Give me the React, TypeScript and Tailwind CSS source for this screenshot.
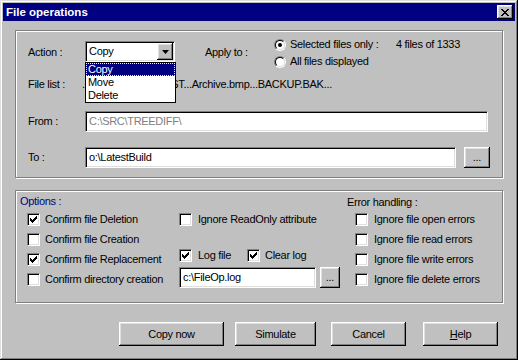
import React from 'react';

// win95 bevels
const sunken =
  'border border-t-[#808080] border-l-[#808080] border-r-white border-b-white shadow-[inset_1px_1px_0_#000,inset_-1px_-1px_0_#dfdfdf]';
const raised =
  'bg-[#c0c0c0] shadow-[inset_-1px_-1px_0_#000,inset_1px_1px_0_#fff,inset_-2px_-2px_0_#808080,inset_2px_2px_0_#dfdfdf]';
const etched = 'border border-[#808080] shadow-[1px_1px_0_#fff,inset_1px_1px_0_#fff]';

function Check({ checked }: { checked?: boolean }) {
  return (
    <span className={`w-[13px] h-[13px] shrink-0 bg-white flex items-center justify-center ${sunken}`}>
      {checked && (
        <svg width="7" height="7" viewBox="0 0 7 7" shapeRendering="crispEdges">
          {[2, 3, 4, 3, 2, 1, 0].map((y, x) => (
            <rect key={x} x={x} y={y} width="1" height="3" fill="#000" />
          ))}
        </svg>
      )}
    </span>
  );
}

function Radio({ checked }: { checked?: boolean }) {
  return (
    <span className="w-[12px] h-[12px] shrink-0 rounded-full border border-t-[#808080] border-l-[#808080] border-r-white border-b-white flex">
      <span className="flex-1 rounded-full border border-t-black border-l-black border-r-[#dfdfdf] border-b-[#dfdfdf] bg-white flex items-center justify-center">
        {checked && <span className="w-[4px] h-[4px] rounded-full bg-black" />}
      </span>
    </span>
  );
}

function CheckRow({ label, checked, gap = 'gap-[6px]' }: { label: string; checked?: boolean; gap?: string }) {
  return (
    <div className={`h-[20px] flex items-center ${gap}`}>
      <Check checked={checked} />
      <span className="whitespace-nowrap">{label}</span>
    </div>
  );
}

function CloseGlyph() {
  const rows: [number, number][][] = [
    [[0, 2], [6, 2]],
    [[1, 2], [5, 2]],
    [[2, 4]],
    [[3, 2]],
    [[2, 4]],
    [[1, 2], [5, 2]],
    [[0, 2], [6, 2]],
  ];
  return (
    <svg width="8" height="7" viewBox="0 0 8 7" shapeRendering="crispEdges">
      {rows.map((segs, y) =>
        segs.map(([x, w], i) => <rect key={`${y}-${i}`} x={x} y={y} width={w} height="1" fill="#000" />)
      )}
    </svg>
  );
}

export default function App() {
  return (
    <div className="w-[518px] h-[360px] bg-[#c0c0c0] shadow-[inset_-1px_-1px_0_#000,inset_1px_1px_0_#dfdfdf,inset_-2px_-2px_0_#808080,inset_2px_2px_0_#fff] flex flex-col text-black text-[11px] leading-[13px] tracking-[-0.3px] font-['Liberation_Sans',Arial,sans-serif]">
      {/* Title bar */}
      <div className="mx-[3px] mt-[3px] h-[18px] bg-[#000080] flex items-center pl-[3px] pr-[2px]">
        <span className="text-white font-bold text-[11.5px] tracking-normal">File operations</span>
        <button className={`ml-auto w-[16px] h-[14px] flex items-center justify-center ${raised}`}>
          <CloseGlyph />
        </button>
      </div>

      {/* Action group */}
      <div className={`relative mx-[15px] mt-[9px] h-[148px] pl-[12px] pt-[5px] ${etched}`}>
        <div className="flex items-start h-[34px]">
          <span className="w-[57px] mt-[10px]">Action :</span>
          <div className={`mt-[5px] w-[90px] h-[21px] bg-white flex items-center ${sunken}`}>
            <span className="pl-[3px]">Copy</span>
            <span className={`ml-auto mr-[1px] w-[16px] h-[17px] flex items-center justify-center ${raised}`}>
              <svg width="7" height="4" viewBox="0 0 7 4">
                <polygon points="0,0 7,0 3.5,4" fill="#000" />
              </svg>
            </span>
          </div>
          <span className="ml-[30px] mt-[10px] w-[69px]">Apply to :</span>
          <div className="flex flex-col">
            <div className="h-[17px] flex items-center">
              <Radio checked />
              <span className="ml-[4px] w-[106px]">Selected files only :</span>
              <span>4 files of 1333</span>
            </div>
            <div className="h-[17px] flex items-center">
              <Radio />
              <span className="ml-[4px]">All files displayed</span>
            </div>
          </div>
        </div>

        <div className="mt-[8px] flex h-[13px]">
          <span className="w-[54px]">File list :</span>
          <span className="whitespace-nowrap">...FileOp.log...LATEST...Archive.bmp...BACKUP.BAK...</span>
        </div>

        <div className="mt-[20px] flex items-center h-[21px]">
          <span className="w-[57px]">From :</span>
          <div className={`w-[403px] h-[21px] bg-white flex items-center pl-[3px] text-[#808080] ${sunken}`}>
            C:\SRC\TREEDIFF\
          </div>
        </div>

        <div className="mt-[15px] flex items-center h-[21px]">
          <span className="w-[57px]">To :</span>
          <div className={`w-[371px] h-[21px] bg-white flex items-center pl-[3px] ${sunken}`}>o:\LatestBuild</div>
          <button className={`ml-[8px] w-[26px] h-[21px] ${raised}`}>...</button>
        </div>

        {/* open combo list */}
        <div className="absolute left-[69px] top-[31px] w-[91px] h-[41px] bg-white border border-black flex flex-col">
          <div className="h-[13px] bg-[#000080] text-white border border-dotted border-[#ffff80] pl-[1px] leading-[11px]">
            Copy
          </div>
          <div className="h-[13px] pl-[2px]">Move</div>
          <div className="h-[13px] pl-[2px]">Delete</div>
        </div>
      </div>

      {/* Options group */}
      <div className={`mx-[15px] mt-[12px] h-[113px] flex ${etched}`}>
        <div className="w-[163px] pl-[4px] flex flex-col">
          <span className="mt-[4px] text-[#000080]">Options :</span>
          <div className="mt-[1px] pl-[7px] flex flex-col">
            <CheckRow label="Confirm file Deletion" checked gap="gap-[5px]" />
            <CheckRow label="Confirm file Creation" gap="gap-[5px]" />
            <CheckRow label="Confirm file Replacement" checked gap="gap-[5px]" />
            <CheckRow label="Confirm directory creation" gap="gap-[5px]" />
          </div>
        </div>

        <div className="w-[168px] pt-[18px] flex flex-col">
          <CheckRow label="Ignore ReadOnly attribute" />
          <div className="mt-[16px] h-[20px] flex items-center">
            <Check checked />
            <span className="ml-[6px] w-[49px]">Log file</span>
            <Check checked />
            <span className="ml-[5px]">Clear log</span>
          </div>
          <div className="mt-[2px] flex">
            <div className={`w-[137px] h-[21px] bg-white flex items-center pl-[3px] ${sunken}`}>c:\FileOp.log</div>
            <button className={`ml-[4px] w-[20px] h-[21px] ${raised}`}>...</button>
          </div>
        </div>

        <div className="flex flex-col">
          <span className="mt-[5px]">Error handling :</span>
          <div className="pl-[8px] flex flex-col">
            <CheckRow label="Ignore file open errors" />
            <CheckRow label="Ignore file read errors" />
            <CheckRow label="Ignore file write errors" />
            <CheckRow label="Ignore file delete errors" />
          </div>
        </div>
      </div>

      {/* Buttons */}
      <div className="mt-[19px] flex h-[24px]">
        <button className={`ml-[119px] w-[105px] ${raised}`}>Copy now</button>
        <button className={`ml-[11px] w-[81px] ${raised}`}>Simulate</button>
        <button className={`ml-[15px] w-[75px] ${raised}`}>Cancel</button>
        <button className={`ml-[17px] w-[75px] ${raised}`}>
          <span className="underline">H</span>elp
        </button>
      </div>
    </div>
  );
}
